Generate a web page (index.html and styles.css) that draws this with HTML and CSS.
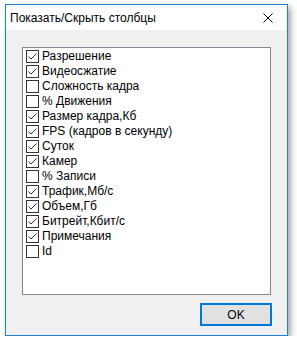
FILE: index.html
```html
<!DOCTYPE html>
<html lang="ru">
<head>
    <meta charset="UTF-8">
    <title>Показать/Скрыть столбцы</title>
    <link rel="stylesheet" href="styles.css">
</head>
<body>
<div class="window">
    <div class="titlebar">
        <span class="title">Показать/Скрыть столбцы</span>
        <span class="close">
            <svg width="10" height="10" viewBox="0 0 10 10"><path d="M0.5 0.5L9.5 9.5M9.5 0.5L0.5 9.5" stroke="#000" stroke-width="1"/></svg>
        </span>
    </div>
    <div class="content">
        <ul class="columns" id="columns">
            <li class="checked"><span class="box"><svg viewBox="0 0 11 11"><path d="M1.5 5.5L4 8L9.5 2.5" fill="none" stroke="#333" stroke-width="1"/></svg></span>Разрешение</li>
            <li class="checked"><span class="box"><svg viewBox="0 0 11 11"><path d="M1.5 5.5L4 8L9.5 2.5" fill="none" stroke="#333" stroke-width="1"/></svg></span>Видеосжатие</li>
            <li><span class="box"></span>Сложность кадра</li>
            <li><span class="box"></span>% Движения</li>
            <li class="checked"><span class="box"><svg viewBox="0 0 11 11"><path d="M1.5 5.5L4 8L9.5 2.5" fill="none" stroke="#333" stroke-width="1"/></svg></span>Размер кадра,Кб</li>
            <li class="checked"><span class="box"><svg viewBox="0 0 11 11"><path d="M1.5 5.5L4 8L9.5 2.5" fill="none" stroke="#333" stroke-width="1"/></svg></span>FPS (кадров в секунду)</li>
            <li class="checked"><span class="box"><svg viewBox="0 0 11 11"><path d="M1.5 5.5L4 8L9.5 2.5" fill="none" stroke="#333" stroke-width="1"/></svg></span>Суток</li>
            <li class="checked"><span class="box"><svg viewBox="0 0 11 11"><path d="M1.5 5.5L4 8L9.5 2.5" fill="none" stroke="#333" stroke-width="1"/></svg></span>Камер</li>
            <li><span class="box"></span>% Записи</li>
            <li class="checked"><span class="box"><svg viewBox="0 0 11 11"><path d="M1.5 5.5L4 8L9.5 2.5" fill="none" stroke="#333" stroke-width="1"/></svg></span>Трафик,Мб/с</li>
            <li class="checked"><span class="box"><svg viewBox="0 0 11 11"><path d="M1.5 5.5L4 8L9.5 2.5" fill="none" stroke="#333" stroke-width="1"/></svg></span>Объем,Гб</li>
            <li class="checked"><span class="box"><svg viewBox="0 0 11 11"><path d="M1.5 5.5L4 8L9.5 2.5" fill="none" stroke="#333" stroke-width="1"/></svg></span>Битрейт,Кбит/с</li>
            <li class="checked"><span class="box"><svg viewBox="0 0 11 11"><path d="M1.5 5.5L4 8L9.5 2.5" fill="none" stroke="#333" stroke-width="1"/></svg></span>Примечания</li>
            <li><span class="box"></span>Id</li>
        </ul>
        <div class="buttons">
            <button type="button" class="ok-btn">OK</button>
        </div>
    </div>
</div>
</body>
</html>
```

FILE: styles.css
```css
body {
    margin: 0;
    background-color: #ffffff;
    font-family: "Liberation Sans", Arial, sans-serif;
    font-size: 12px;
    color: #000;
}

.window {
    margin: 4px 0 0 5px;
    width: 281px;
    height: 330px;
    border: 1px solid #1c7fd6;
    background-color: #f0f0f0;
    box-shadow: 3px 3px 6px rgba(0, 0, 0, 0.35);
    display: flex;
    flex-direction: column;
}

.titlebar {
    height: 26px;
    background-color: #fff;
    display: flex;
    align-items: center;
    justify-content: space-between;
    padding-left: 4px;
}

.title {
    font-size: 12px;
}

.close {
    width: 30px;
    display: flex;
    justify-content: center;
    padding-right: 4px;
}

.close svg {
    display: block;
}

.content {
    flex: 1;
    padding: 17px 16px 9px 16px;
    display: flex;
    flex-direction: column;
}

.columns {
    list-style: none;
    margin: 0;
    padding: 1px 0 0 2px;
    height: 245px;
    border: 1px solid #828790;
    background-color: #fff;
}

.columns li {
    height: 15px;
    display: flex;
    align-items: center;
    white-space: nowrap;
    line-height: 15px;
}

.box {
    width: 11px;
    height: 11px;
    border: 1px solid #333;
    background-color: #fff;
    margin: 0 3px 0 1px;
    flex-shrink: 0;
}

.box svg {
    display: block;
    width: 11px;
    height: 11px;
}

.buttons {
    display: flex;
    justify-content: flex-end;
    margin-top: 8px;
}

.ok-btn {
    width: 72px;
    height: 23px;
    margin-right: -1px;
    background-color: #e1e1e1;
    border: 2px solid #0078d7;
    font-family: "Liberation Sans", Arial, sans-serif;
    font-size: 12px;
    padding: 0;
    color: #000;
}
```
